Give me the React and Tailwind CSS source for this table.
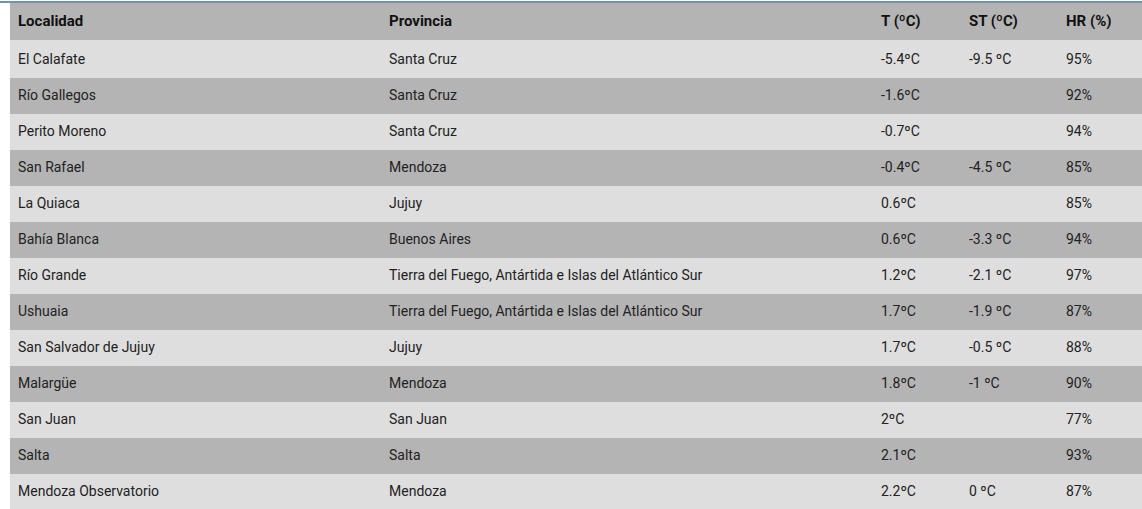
import React from "react";

const rows = [
  ["El Calafate", "Santa Cruz", "-5.4ºC", "-9.5 ºC", "95%"],
  ["Río Gallegos", "Santa Cruz", "-1.6ºC", "", "92%"],
  ["Perito Moreno", "Santa Cruz", "-0.7ºC", "", "94%"],
  ["San Rafael", "Mendoza", "-0.4ºC", "-4.5 ºC", "85%"],
  ["La Quiaca", "Jujuy", "0.6ºC", "", "85%"],
  ["Bahía Blanca", "Buenos Aires", "0.6ºC", "-3.3 ºC", "94%"],
  ["Río Grande", "Tierra del Fuego, Antártida e Islas del Atlántico Sur", "1.2ºC", "-2.1 ºC", "97%"],
  ["Ushuaia", "Tierra del Fuego, Antártida e Islas del Atlántico Sur", "1.7ºC", "-1.9 ºC", "87%"],
  ["San Salvador de Jujuy", "Jujuy", "1.7ºC", "-0.5 ºC", "88%"],
  ["Malargüe", "Mendoza", "1.8ºC", "-1 ºC", "90%"],
  ["San Juan", "San Juan", "2ºC", "", "77%"],
  ["Salta", "Salta", "2.1ºC", "", "93%"],
  ["Mendoza Observatorio", "Mendoza", "2.2ºC", "0 ºC", "87%"],
];

export default function App() {
  return (
    <div
      className="w-[1142px] h-[509px] overflow-hidden bg-white"
      style={{ fontFamily: "Roboto, 'Liberation Sans', sans-serif" }}
    >
      <div className="h-[1px] bg-white" />
      <div className="h-[2px] bg-[#6f96a6]" />
      <div className="pl-[10px]">
        <table className="w-[1132px] border-collapse text-[14px] text-[#222]">
          <colgroup>
            <col className="w-[371px]" />
            <col className="w-[492px]" />
            <col className="w-[88px]" />
            <col className="w-[97px]" />
            <col className="w-[84px]" />
          </colgroup>
          <thead>
            <tr className="bg-[#b4b4b4] h-[37px] text-[15px]">
              <th className="text-left font-bold px-2 py-0 text-[#111]">Localidad</th>
              <th className="text-left font-bold px-2 py-0 text-[#111]">Provincia</th>
              <th className="text-left font-bold px-2 py-0 text-[#111]">T (ºC)</th>
              <th className="text-left font-bold px-2 py-0 text-[#111]">ST (ºC)</th>
              <th className="text-left font-bold px-2 py-0 text-[#111]">HR (%)</th>
            </tr>
          </thead>
          <tbody>
            {rows.map((r, i) => (
              <tr
                key={i}
                className={
                  (i % 2 === 0 ? "bg-[#dedede] " : "bg-[#b4b4b4] ") +
                  (i === 0 ? "h-[38px]" : "h-[36px]")
                }
              >
                {r.map((c, j) => (
                  <td
                    key={j}
                    className={
                      "px-2 align-middle whitespace-nowrap " +
                      (i === 0 ? "pt-[1px] pb-0" : "pt-0 pb-[1px]")
                    }
                  >
                    {c}
                  </td>
                ))}
              </tr>
            ))}
          </tbody>
        </table>
      </div>
    </div>
  );
}
